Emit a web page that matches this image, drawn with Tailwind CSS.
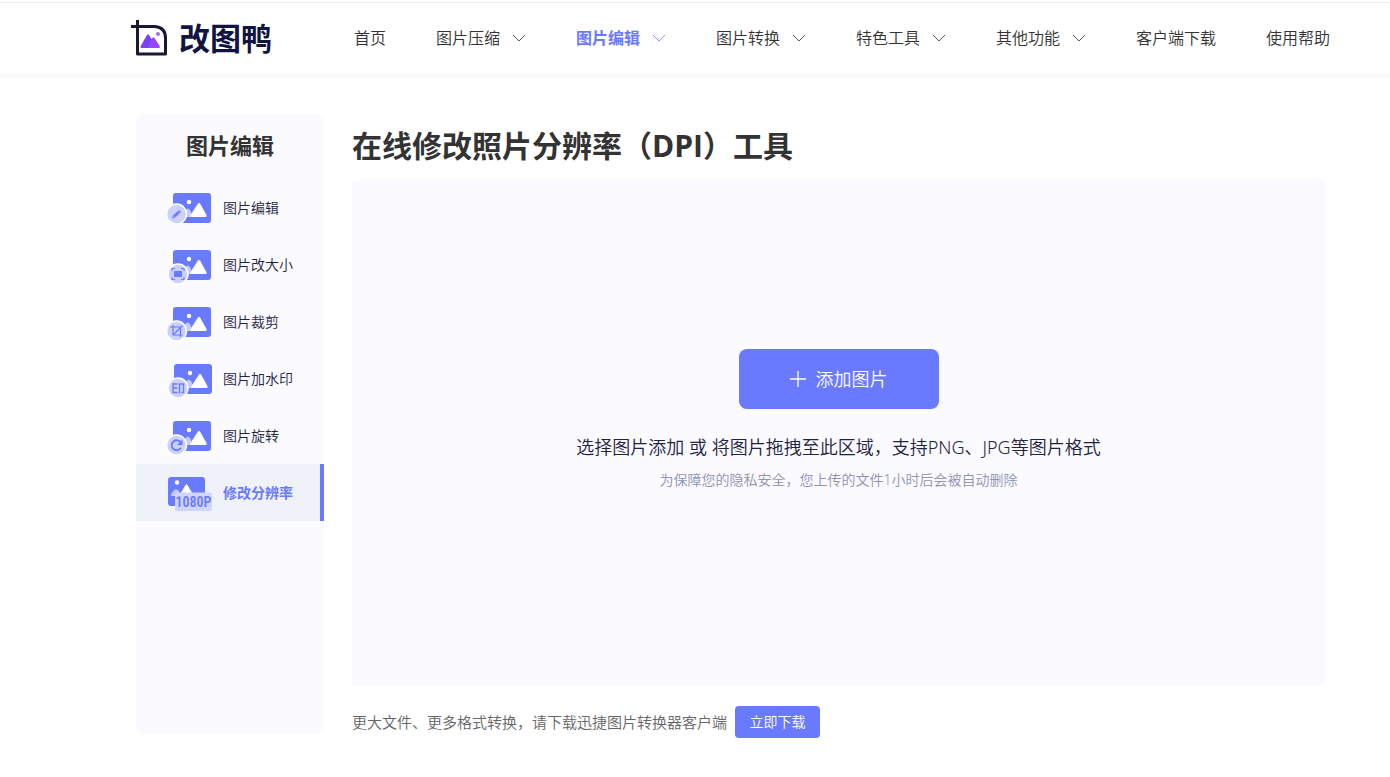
<!DOCTYPE html>
<html lang="zh-CN">
<head>
<meta charset="utf-8">
<meta name="viewport" content="width=device-width, initial-scale=1">
<title>在线修改照片分辨率（DPI）工具</title>
<script src="https://cdn.jsdelivr.net/npm/@tailwindcss/browser@4"></script>
</head>
<body class="bg-white text-[#333] font-[350] font-['Open_Sans','Noto_Sans_CJK_SC',sans-serif]">
<svg class="hidden" aria-hidden="true">
  <symbol id="chev" viewBox="0 0 14 8"><path d="M1 1l6 6 6-6" fill="none" stroke="currentColor" stroke-width="1" opacity=".8"/></symbol>
  <symbol id="pic" viewBox="0 0 38 30">
    <rect width="38" height="30" rx="3" fill="#6a7aff"/>
    <circle cx="16" cy="9" r="2.2" fill="#fff"/>
    <path d="M12 24v-5q0-3 3-3.500q2 .5 3 3.500l1 5z" fill="#c3caff"/>
    <path d="M25 10.500Q26 9 27 10.500L33.500 22q.8 2-1 2H18.500q-2 0-1-2z" fill="#fff"/>
  </symbol>
</svg>

<header class="border-t border-[#ececec] mt-[2px] border-b-[5px] border-b-[#f9f9f9] h-[76px] flex items-center justify-between pl-[131px] pr-[60px]">
  <a href="#" class="flex items-center gap-[11px] text-[#10143f]">
    <svg class="w-[37px] h-[36px]" viewBox="0 0 37 36" fill="none" aria-hidden="true">
      <path d="M0 6.500H24Q34.500 7.500 34.500 18V34H6.500V0" stroke="#191a30" stroke-width="3" stroke-linejoin="round"/>
      <path d="M10 28Q9 28 10 25.500L16 15q1-1.500 2 0l2.500 4 1-1q1.500-1 2.500 1l4.500 7q.6 2-1 2z" fill="#7b3ff5"/>
      <path d="M17 28l4-9.500q1.500-2 3 .5l4.500 7q.6 2-1 2z" fill="#9748ff"/>
      <circle cx="27" cy="14" r="2" fill="#a06bf5"/>
    </svg>
    <span class="text-[31px] leading-9 font-bold">改图鸭</span>
  </a>
  <nav class="flex items-center gap-[50px] text-base leading-6 whitespace-nowrap">
    <a href="#">首页</a>
    <a href="#" class="flex items-center gap-3">图片压缩<svg class="w-3.5 h-2"><use href="#chev"/></svg></a>
    <a href="#" class="flex items-center gap-3 text-[#6a7aff]"><b class="font-bold">图片编辑</b><svg class="w-3.5 h-2"><use href="#chev"/></svg></a>
    <a href="#" class="flex items-center gap-3">图片转换<svg class="w-3.5 h-2"><use href="#chev"/></svg></a>
    <a href="#" class="flex items-center gap-3">特色工具<svg class="w-3.5 h-2"><use href="#chev"/></svg></a>
    <a href="#" class="flex items-center gap-3">其他功能<svg class="w-3.5 h-2"><use href="#chev"/></svg></a>
    <a href="#">客户端下载</a>
    <a href="#">使用帮助</a>
  </nav>
</header>

<div class="flex items-start gap-7 pt-[35px] pb-9 pl-[136px] pr-[65px]">
  <aside class="mb-[3px] w-[188px] shrink-0 self-stretch rounded-lg bg-[#fafaff]">
    <h2 class="h-[66px] pt-4 text-center text-[22px] leading-8 font-bold">图片编辑</h2>
    <nav class="text-sm text-[#1f2340]">
      <a href="#" class="flex h-[57px] items-center gap-[9px] pl-[30px]">
        <svg class="w-12 h-9" viewBox="0 0 48 36" aria-hidden="true"><use href="#pic" x="7" y="3" width="38" height="30"/>
          <circle cx="10.500" cy="24" r="10" fill="#cbd1ff" stroke="#fff" stroke-width="1.500"/>
          <path d="M6 28.500l1-3 6-5.500 2 2-6 5.500z" fill="#6a7aff"/><path d="M9 27.500l-2-2M13.500 23.500l-2-2" stroke="#cbd1ff" stroke-width=".6"/></svg>
        图片编辑</a>
      <a href="#" class="flex h-[57px] items-center gap-[9px] pl-[30px]">
        <svg class="w-12 h-9 overflow-visible" viewBox="0 0 48 36" aria-hidden="true"><use href="#pic" x="7" y="3" width="38" height="30"/>
          <circle cx="12" cy="27" r="10" fill="#cbd1ff" stroke="#fff" stroke-width="1.500"/>
          <rect x="8" y="24" width="8" height="6" rx=".5" fill="#6a7aff"/>
          <path d="M9 21.500H6V24M15 21.500h3V24M6 30V32.500h3M18 30V32.500h-3" fill="none" stroke="#6a7aff" stroke-width="1.100"/></svg>
        图片改大小</a>
      <a href="#" class="flex h-[57px] items-center gap-[9px] pl-[30px]">
        <svg class="w-12 h-9 overflow-visible" viewBox="0 0 48 36" aria-hidden="true"><use href="#pic" x="7" y="3" width="38" height="30"/>
          <circle cx="10.500" cy="27" r="10" fill="#cbd1ff" stroke="#fff" stroke-width="1.500"/>
          <path d="M4 23h10.500v10M7 21V31h9.500M7 31L16.500 21.500" fill="none" stroke="#6a7aff" stroke-width="1.200"/></svg>
        图片裁剪</a>
      <a href="#" class="flex h-[57px] items-center gap-[9px] pl-[30px]">
        <svg class="w-12 h-9 overflow-visible" viewBox="0 0 48 36" aria-hidden="true"><use href="#pic" x="8" y="3" width="38" height="30"/>
          <circle cx="12" cy="27" r="10" fill="#cbd1ff" stroke="#fff" stroke-width="1.500"/>
          <path d="M11.500 23H7v8.500h4.500M7 27h4.500M13.500 32.500V23h4v8.500h-2" fill="none" stroke="#6a7aff" stroke-width="1.400"/></svg>
        图片加水印</a>
      <a href="#" class="flex h-[57px] items-center gap-[9px] pl-[30px]">
        <svg class="w-12 h-9 overflow-visible" viewBox="0 0 48 36" aria-hidden="true"><use href="#pic" x="7" y="3" width="38" height="30"/>
          <circle cx="10.500" cy="27" r="10" fill="#cbd1ff" stroke="#fff" stroke-width="1.500"/>
          <path d="M14.800 24.500A5 5 0 1 0 14.800 30" fill="none" stroke="#6a7aff" stroke-width="1.800"/><path d="M16.500 21.500v5.500h-5.500z" fill="#6a7aff"/></svg>
        图片旋转</a>
      <a href="#" aria-current="page" class="flex h-[57px] items-center gap-[9px] pl-[30px] bg-[#f0f2fa] border-r-4 border-[#6a7aff] text-[#6a7aff] font-bold">
        <svg class="w-12 h-9" viewBox="0 0 48 36" aria-hidden="true">
          <rect x="2" y="2" width="37" height="29" rx="3" fill="#6a7aff"/>
          <circle cx="11" cy="7.500" r="2.200" fill="#fff"/>
          <path d="M5 20q2-5 5-6l3 2v5H5z" fill="#c3caff"/>
          <path d="M13 21l6.500-11q1-1.500 2 0L28 21z" fill="#fff"/>
          <rect x="9" y="17.500" width="37" height="18.500" rx="2" fill="#cfd5ff"/>
          <text x="27.500" y="32" text-anchor="middle" font-family="'Roboto Condensed','Roboto',sans-serif" font-weight="600" font-size="14" fill="#6a7aff">1080P</text></svg>
        修改分辨率</a>
    </nav>
  </aside>

  <main class="min-w-0 flex-1">
    <h1 class="h-[66px] pt-3 text-3xl leading-[42px] font-bold">在线修改照片分辨率（DPI）工具</h1>
    <section class="flex min-h-[507px] flex-col items-center rounded bg-[#fafaff] pt-[170px] font-['Noto_Sans','Noto_Sans_CJK_SC',sans-serif]">
      <button type="button" class="flex h-[60px] w-[200px] items-center justify-center gap-2.5 rounded-lg bg-[#6a7aff] text-lg text-white">
        <svg class="size-4" viewBox="0 0 16 16" aria-hidden="true"><path d="M8 0v16M0 8h16" stroke="#fff" stroke-width="1.300"/></svg>添加图片</button>
      <p class="mt-6 text-lg leading-7 text-[#1f2340]">选择图片添加 或 将图片拖拽至此区域，支持PNG、JPG等图片格式</p>
      <p class="mt-2 text-sm leading-[22px] text-[#8d93b3]">为保障您的隐私安全，您上传的文件1小时后会被自动删除</p>
    </section>
    <div class="mt-5 flex items-center gap-2 text-[15px] text-[#666]">
      <p>更大文件、更多格式转换，请下载迅捷图片转换器客户端</p>
      <button type="button" class="h-8 w-[85px] rounded bg-[#6a7aff] text-sm text-white">立即下载</button>
    </div>
  </main>
</div>
</body>
</html>
